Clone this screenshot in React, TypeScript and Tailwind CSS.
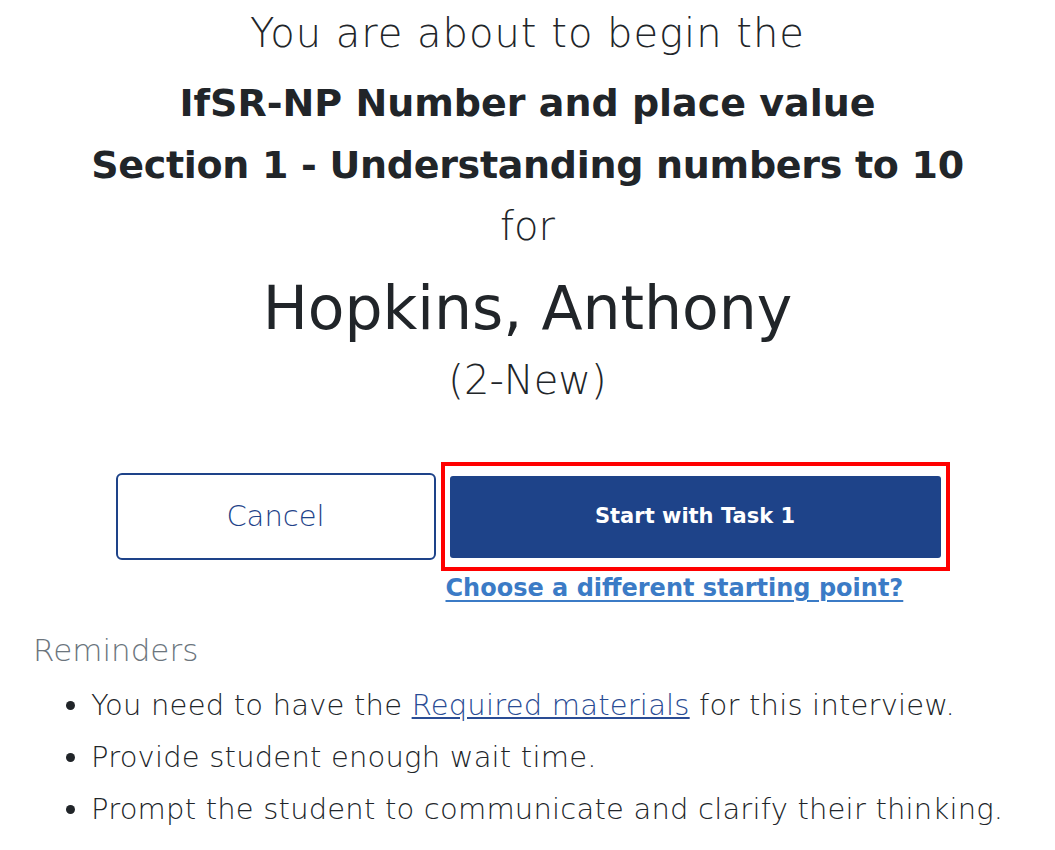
export default function App() {
  return (
    <div className="min-h-[850px] bg-white text-[#212529]" style={{ fontFamily: '"DejaVu Sans", sans-serif' }}>
      <div className="flex flex-col items-center pt-[9px]">
        <div className="text-[40px] font-extralight leading-[48px] tracking-[1px]">You are about to begin the</div>
        <div className="mt-[15px] text-[38px] font-bold leading-[62px] text-center">
          <div>IfSR-NP Number and place value</div>
          <div className="tracking-[-0.3px]">Section 1 - Understanding numbers to 10</div>
        </div>
        <div className="mt-[6px] text-[40px] font-extralight leading-[48px]">for</div>
        <div className="mt-[18px] text-[60px] font-normal leading-[80px]">Hopkins, Anthony</div>
        <div className="mt-[8px] text-[40px] font-extralight leading-[48px]">(2-New)</div>
      </div>

      <div className="mt-[58px] flex justify-center pl-[10px]">
        <div className="flex items-start gap-[5px]">
          <button className="mt-[11px] flex h-[87px] w-[320px] items-center justify-center rounded-[6px] border-2 border-[#1e4389] text-[29px] font-extralight text-[#1e4389]">
            Cancel
          </button>
          <div className="flex flex-col">
            <div className="border-4 border-[#ff0000] p-[5px] pt-[10px] pb-[9px]">
              <button className="flex h-[82px] w-[491px] items-center justify-center rounded-[3px] bg-[#1e4389] text-[21px] font-bold text-white">
                Start with Task 1
              </button>
            </div>
            <a href="#" className="ml-[5px] mt-[2px] self-start text-[24px] font-bold leading-[30px] text-[#3b7bc6] underline decoration-2 underline-offset-4">
              Choose a different starting point?
            </a>
          </div>
        </div>
      </div>

      <div className="mt-[27px] px-[33px]">
        <div className="text-[31px] font-extralight leading-[40px] text-[#6c757d]">Reminders</div>
        <ul className="mt-[9px] list-disc pl-[58px] text-[29px] font-extralight tracking-[0.2px] text-[#212529] marker:text-[#212529]">
          <li className="leading-[52px]">
            You need to have the{' '}
            <a href="#" className="text-[#2a4c94] underline">Required materials</a> for this interview.
          </li>
          <li className="leading-[52px]">Provide student enough wait time.</li>
          <li className="leading-[52px]">Prompt the student to communicate and clarify their thinking.</li>
        </ul>
      </div>
    </div>
  )
}
